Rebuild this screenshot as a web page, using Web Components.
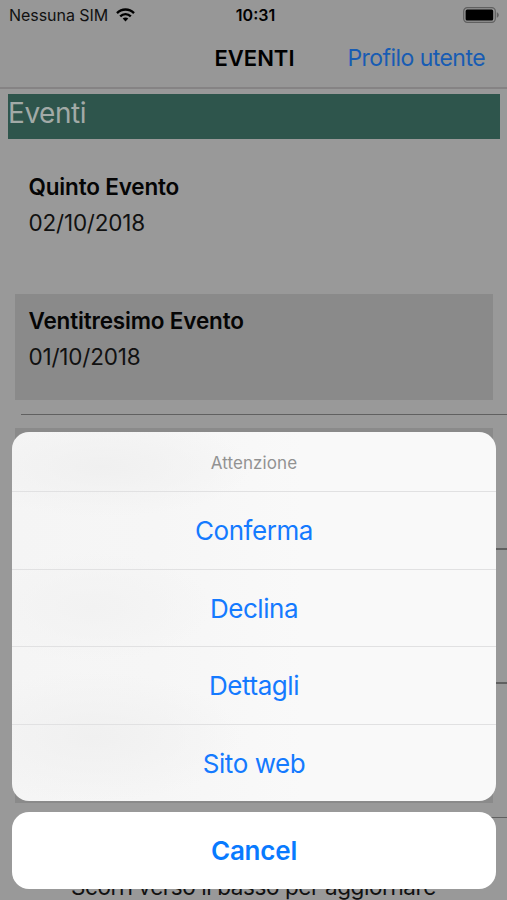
<!DOCTYPE html>
<html lang="it">
<head>
  <meta charset="UTF-8">
  <title>Eventi</title>
  <style>
    body {
      margin: 0;
      width: 507px;
      height: 900px;
      overflow: hidden;
      background: #999;
      font-family: Inter, "Liberation Sans", sans-serif;
    }
  </style>
</head>
<body>
  <event-app></event-app>

  <script>
    // Status bar: carrier, clock and battery
    class StatusBar extends HTMLElement {
      constructor() {
        super();
        this.attachShadow({ mode: 'open' });
      }

      get styles() {
        return `
          :host {
            display: grid;
            grid-template-columns: 1fr auto 1fr;
            align-items: center;
            height: 30px;
            padding: 0 7px 0 9px;
            font-size: 16px;
            color: #111;
          }
          .carrier, .power { display: flex; align-items: center; }
          .carrier { gap: 8px; }
          .carrier span { letter-spacing: -0.05px; }
          .power { justify-content: flex-end; }
          time { font-weight: 600; color: #000; letter-spacing: 0; margin-left: 2px; }
          svg { display: block; }
        `;
      }

      connectedCallback() {
        this.shadowRoot.innerHTML = `
          <style>${this.styles}</style>
          <div class="carrier">
            <span>${this.getAttribute('carrier')}</span>
            <svg width="19" height="14" viewBox="0 0 19 14" fill="none" stroke="#000" stroke-width="2.4">
              <path d="M1 5.1C5.8 .3 13.2 .3 18 5.1"/>
              <path d="M4.2 8.3C7.2 5.4 11.8 5.4 14.8 8.3"/>
              <path d="M9.5 13.4L6.7 10.6C8.3 9.2 10.7 9.2 12.3 10.6Z" fill="#000" stroke="none"/>
            </svg>
          </div>
          <time>${this.getAttribute('time')}</time>
          <div class="power">
            <svg width="37" height="16" viewBox="0 0 37 16">
              <rect x=".7" y=".7" width="31.6" height="14.6" rx="3.6" fill="none" stroke="#606060" stroke-width="1.2"/>
              <rect x="2.6" y="2.6" width="27.6" height="10.8" rx="1.5" fill="#000"/>
              <path d="M33.8 5.3C36.5 6.3 36.5 9.7 33.8 10.7Z" fill="#606060"/>
            </svg>
          </div>
        `;
      }
    }
    customElements.define('status-bar', StatusBar);

    // Navigation bar with a centred title and one action on the right
    class NavBar extends HTMLElement {
      constructor() {
        super();
        this.attachShadow({ mode: 'open' });
      }

      get styles() {
        return `
          :host {
            display: grid;
            grid-template-columns: 1fr auto 1fr;
            align-items: center;
            box-sizing: border-box;
            height: 59px;
            padding: 0 22px 2px 24px;
            border-bottom: 2px solid #858384;
            font-size: 23px;
          }
          h1 {
            grid-column: 2;
            margin: 0;
            font-size: 22px;
            font-weight: 600;
            color: #000;
          }
          .action { text-align: right; color: #185cb3; white-space: nowrap; letter-spacing: -0.55px; }
        `;
      }

      connectedCallback() {
        this.shadowRoot.innerHTML = `
          <style>${this.styles}</style>
          <h1><slot></slot></h1>
          <div class="action"><slot name="action"></slot></div>
        `;
      }
    }
    customElements.define('nav-bar', NavBar);

    // One event of the list, "shaded" gives it the grey box
    class EventRow extends HTMLElement {
      constructor() {
        super();
        this.attachShadow({ mode: 'open' });
      }

      get styles() {
        return `
          :host { display: block; height: 134.2px; box-sizing: border-box; padding-top: 14px; }
          .box {
            box-sizing: border-box;
            height: 106px;
            margin: 0 14px 0 15px;
            padding: 9px 13.5px;
            font-size: 22.5px;
            line-height: 36px;
            color: #111;
          }
          :host([shaded]) .box { background: #8a8a8a; }
          .name { font-weight: 600; color: #050505; letter-spacing: -0.17px; }
          .date { letter-spacing: -0.2px; }
          .line { height: 1.5px; margin: 13.8px 0 0 21px; }
          :host([shaded]) .line { background: #606060; }
        `;
      }

      connectedCallback() {
        this.shadowRoot.innerHTML = `
          <style>${this.styles}</style>
          <div class="box">
            <div class="name"><slot name="name"></slot></div>
            <div class="date"><slot name="date"></slot></div>
          </div>
          <div class="line"></div>
        `;
      }
    }
    customElements.define('event-row', EventRow);

    // Button of the action sheet
    class SheetButton extends HTMLElement {
      constructor() {
        super();
        this.attachShadow({ mode: 'open' });
      }

      get styles() {
        return `
          :host { display: block; }
          button {
            display: block;
            width: 100%;
            height: 77px;
            padding: 0;
            border: 0;
            background: none;
            font: inherit;
            font-size: 26px;
            letter-spacing: -0.45px;
            color: #147aff;
          }
          :host([cancel]) button { font-weight: 600; color: #087aff; letter-spacing: -0.2px; }
        `;
      }

      connectedCallback() {
        this.shadowRoot.innerHTML = `
          <style>${this.styles}</style>
          <button><slot></slot></button>
        `;
      }
    }
    customElements.define('sheet-button', SheetButton);

    // Action sheet, it lies over the list
    class ActionSheet extends HTMLElement {
      constructor() {
        super();
        this.attachShadow({ mode: 'open' });
      }

      get styles() {
        return `
          :host {
            position: absolute;
            left: 12px;
            right: 11px;
            bottom: 11px;
            display: flex;
            flex-direction: column;
            gap: 11px;
          }
          .options, .cancel { border-radius: 17px; overflow: hidden; }
          .options {
            background:
              radial-gradient(ellipse 150px 50px at 90px 35px, #f0f0f0, transparent),
              radial-gradient(ellipse 120px 55px at 80px 175px, #f2f2f2, transparent),
              radial-gradient(ellipse 150px 65px at 80px 305px, #f0f0f0, transparent),
              linear-gradient(90deg, #f5f5f5, #f6f6f6 30%, #f9f9f9 60%);
          }
          .cancel { background: #fff; }
          .title {
            height: 59px;
            line-height: 62px;
            text-align: center;
            font-size: 17px;
            letter-spacing: 0.1px;
            color: #929292;
          }
          ::slotted(sheet-button:not([cancel])) { border-top: 1px solid #e1e1e2; height: 76.5px; }
        `;
      }

      connectedCallback() {
        this.shadowRoot.innerHTML = `
          <style>${this.styles}</style>
          <div class="options">
            <div class="title">${this.getAttribute('heading')}</div>
            <slot></slot>
          </div>
          <div class="cancel"><slot name="cancel"></slot></div>
        `;
      }
    }
    customElements.define('action-sheet', ActionSheet);

    class EventApp extends HTMLElement {
      constructor() {
        super();
        this.attachShadow({ mode: 'open' });
      }

      get styles() {
        return `
          :host {
            position: relative;
            display: block;
            height: 900px;
            overflow: hidden;
          }
          header { background: #979797; }
          .section {
            box-sizing: border-box;
            height: 45px;
            margin: 5px 7px 7px 8px;
            background: #2e554c;
            color: #a2aaa7;
            font-size: 28px;
            line-height: 38px;
            letter-spacing: -0.45px;
          }
          .hint {
            margin: 56px 0 0;
            text-align: center;
            font-size: 22.5px;
            line-height: 28px;
            letter-spacing: -0.42px;
            color: #111;
          }
        `;
      }

      connectedCallback() {
        this.shadowRoot.innerHTML = `
          <style>${this.styles}</style>
          <header>
            <status-bar carrier="Nessuna SIM" time="10:31"></status-bar>
            <nav-bar>EVENTI<span slot="action">Profilo utente</span></nav-bar>
          </header>
          <div class="section">Eventi</div>
          <event-row>
            <span slot="name">Quinto Evento</span>
            <span slot="date">02/10/2018</span>
          </event-row>
          <event-row shaded>
            <span slot="name">Ventitresimo Evento</span>
            <span slot="date">01/10/2018</span>
          </event-row>
          <event-row shaded></event-row>
          <event-row shaded></event-row>
          <event-row shaded></event-row>
          <p class="hint">Scorri verso il basso per aggiornare</p>
          <action-sheet heading="Attenzione">
            <sheet-button>Conferma</sheet-button>
            <sheet-button>Declina</sheet-button>
            <sheet-button>Dettagli</sheet-button>
            <sheet-button>Sito web</sheet-button>
            <sheet-button slot="cancel" cancel>Cancel</sheet-button>
          </action-sheet>
        `;
      }
    }
    customElements.define('event-app', EventApp);
  </script>
</body>
</html>
